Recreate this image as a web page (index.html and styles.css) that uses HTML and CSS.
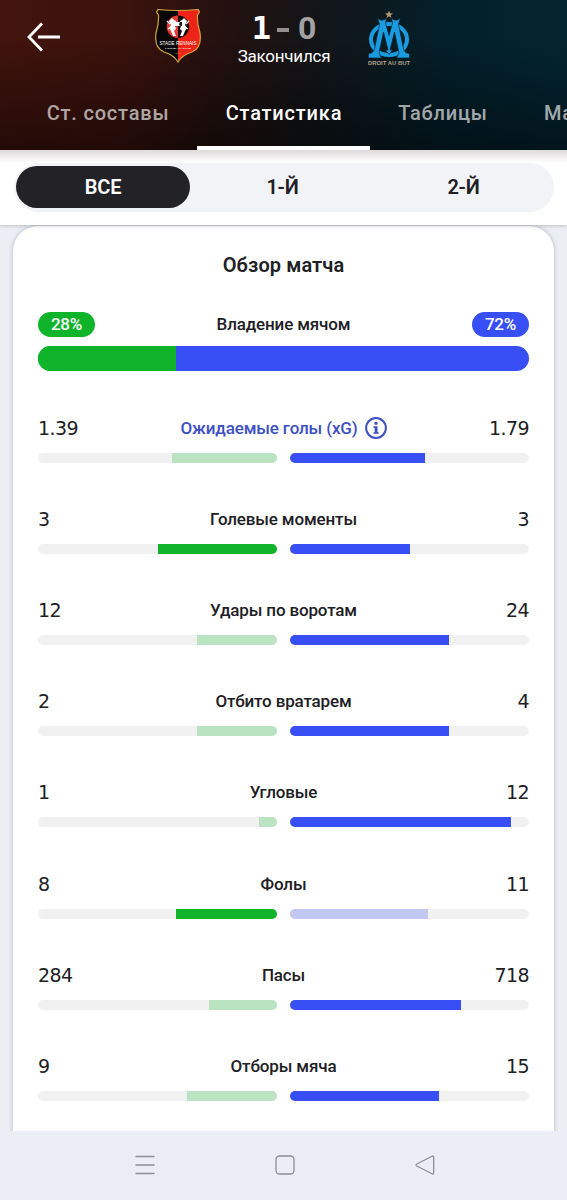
FILE: index.html
```html
<!DOCTYPE html>
<html lang="ru">

<head>
    <meta charset="UTF-8">
    <meta name="viewport" content="width=device-width, initial-scale=1.0">
    <title>Статистика матча</title>
    <link rel="stylesheet" href="styles.css">
</head>

<body>
    <header class="header">
        <div class="match">
            <svg class="back" width="34" height="30" viewBox="0 0 34 30" fill="none" stroke="#fff" stroke-width="2.8">
                <path d="M15 1.500 2 15 15 28.500M11 15H33" />
            </svg>
            <svg class="team-home" width="48" height="56" viewBox="0 0 48 56">
                <path d="M4 1.500Q24 3.500 44 1.500L45.500 4 43.500 7Q43 16 46 25Q48 40 38 44Q28 47 24 54Q20 47 10 44Q0 40 2 25Q5 16 4.500 7L2.500 4Z" fill="#080606" />
                <path d="M24 2.500Q35 2.500 44 1.500L45.500 4 43.500 7Q43 16 46 25Q48 40 38 44Q28 47 24 54Z" fill="#ef2418" />
                <path d="M4 1.500Q24 3.500 44 1.500L45.500 4 43.500 7Q43 16 46 25Q48 40 38 44Q28 47 24 54Q20 47 10 44Q0 40 2 25Q5 16 4.500 7L2.500 4Z" fill="none" stroke="#d6a63c" stroke-width="1.200" />
                <path d="M24 7.500A11 11 0 0 0 24 30Z" fill="#e23a35" />
                <path d="M24 7.500A11 11 0 0 1 24 30Z" fill="#140808" />
                <path d="M18 10 20 12 22 13 23 17 21 18 22 21 20 23 22 28 19 28 17 23 15 20 17 17 15 13Z M30 10 28 12 26 13 25 17 27 18 26 21 28 23 26 28 29 28 31 23 33 20 31 17 33 13Z M20 14H28V18H20Z" fill="#fff" />
                <path d="M13 13 16 16M14 21 17 19M35 13 32 16M34 21 31 19" stroke="#fff" stroke-width="1.200" />
                <text x="24" y="36.500" class="crest-name" textLength="37" lengthAdjust="spacingAndGlyphs">STADE RENNAIS</text>
                <text x="24" y="41" class="crest-sub" textLength="26" lengthAdjust="spacingAndGlyphs">FOOTBALL CLUB</text>
                <text x="24" y="45.500" class="crest-year">1901</text>
            </svg>
            <div class="score">
                <div class="result"><b>1</b><i></i><span>0</span></div>
                <div class="status">Закончился</div>
            </div>
            <svg class="team-away" width="44" height="56" viewBox="0 0 44 56">
                <path d="M22 .5 23 3.300 26 3.400 23.600 5.200 24.500 8 22 6.300 19.500 8 20.400 5.200 18 3.400 21 3.300Z" fill="#b99c6d" />
                <ellipse cx="22" cy="29.500" rx="18" ry="15.500" fill="none" stroke="#1a9be0" stroke-width="4" />
                <path d="M10.500 8Q14 12 19.500 8.500L18.500 13 22 26 25.500 13 24.500 8.500Q30 12 33.500 8L31.500 14 36.500 39Q38 43.500 42.500 43.500V48H29.500L32 43 27.500 22 23 40 25.500 40 22 44.500 18.500 40 21 40 16.500 22 12 43 14.500 48H1.500V43.500Q6 43.500 7.500 39L12.500 14Z" fill="#1a9be0" stroke="#042535" stroke-width=".7" />
                <path d="M17 15 22 31 27 15" fill="none" stroke="#1a9be0" stroke-width="2.500" />
                <text x="22" y="54.500" class="motto" textLength="42" lengthAdjust="spacingAndGlyphs">DROIT AU BUT</text>
            </svg>
        </div>
        <nav class="tabs">
            <div class="tab lineups">Ст. составы</div>
            <div class="tab stats active">Статистика</div>
            <div class="tab tables">Таблицы</div>
            <div class="tab matches">Матчи</div>
        </nav>
    </header>

    <div class="filter">
        <div class="periods">
            <div class="period selected">ВСЕ</div>
            <div class="period">1-Й</div>
            <div class="period">2-Й</div>
        </div>
    </div>

    <main class="content">
        <section class="card">
            <h2>Обзор матча</h2>
            <div class="possession">
                <div class="row">
                    <span class="badge home">28%</span>
                    <span class="label">Владение мячом</span>
                    <span class="badge away">72%</span>
                </div>
                <div class="total"><div class="home" style="width: 28.2%"></div></div>
            </div>
            <div class="stat">
                <div class="row">
                    <span class="value">1.39</span>
                    <span class="label link">Ожидаемые голы (xG)
                        <svg width="22" height="22" viewBox="0 0 22 22">
                            <circle cx="11" cy="11" r="9.900" fill="none" stroke="#3d50c3" stroke-width="2" />
                            <path d="M9.500 5H12.500V7.700H9.500ZM8.500 9.300H12.500V15.200H13.700V16.800H8.500V15.200H9.700V11H8.500Z" fill="#3d50c3" />
                        </svg>
                    </span>
                    <span class="value">1.79</span>
                </div>
                <div class="bars">
                    <div class="bar left"><div class="fill pale" style="width: 43.9%"></div></div>
                    <div class="bar right"><div class="fill" style="width: 56.3%"></div></div>
                </div>
            </div>
            <div class="stat">
                <div class="row"><span class="value">3</span><span class="label">Голевые моменты</span><span class="value">3</span></div>
                <div class="bars">
                    <div class="bar left"><div class="fill" style="width: 50%"></div></div>
                    <div class="bar right"><div class="fill" style="width: 50%"></div></div>
                </div>
            </div>
            <div class="stat">
                <div class="row"><span class="value">12</span><span class="label">Удары по воротам</span><span class="value">24</span></div>
                <div class="bars">
                    <div class="bar left"><div class="fill pale" style="width: 33.3%"></div></div>
                    <div class="bar right"><div class="fill" style="width: 66.7%"></div></div>
                </div>
            </div>
            <div class="stat">
                <div class="row"><span class="value">2</span><span class="label">Отбито вратарем</span><span class="value">4</span></div>
                <div class="bars">
                    <div class="bar left"><div class="fill pale" style="width: 33.3%"></div></div>
                    <div class="bar right"><div class="fill" style="width: 66.7%"></div></div>
                </div>
            </div>
            <div class="stat">
                <div class="row"><span class="value">1</span><span class="label">Угловые</span><span class="value">12</span></div>
                <div class="bars">
                    <div class="bar left"><div class="fill pale" style="width: 7.7%"></div></div>
                    <div class="bar right"><div class="fill" style="width: 92.3%"></div></div>
                </div>
            </div>
            <div class="stat">
                <div class="row"><span class="value">8</span><span class="label">Фолы</span><span class="value">11</span></div>
                <div class="bars">
                    <div class="bar left"><div class="fill" style="width: 42.1%"></div></div>
                    <div class="bar right"><div class="fill pale" style="width: 57.9%"></div></div>
                </div>
            </div>
            <div class="stat">
                <div class="row"><span class="value">284</span><span class="label">Пасы</span><span class="value">718</span></div>
                <div class="bars">
                    <div class="bar left"><div class="fill pale" style="width: 28.3%"></div></div>
                    <div class="bar right"><div class="fill" style="width: 71.7%"></div></div>
                </div>
            </div>
            <div class="stat">
                <div class="row"><span class="value">9</span><span class="label">Отборы мяча</span><span class="value">15</span></div>
                <div class="bars">
                    <div class="bar left"><div class="fill pale" style="width: 37.5%"></div></div>
                    <div class="bar right"><div class="fill" style="width: 62.5%"></div></div>
                </div>
            </div>
        </section>
    </main>

    <footer class="system-nav">
        <svg width="20" height="20" viewBox="0 0 20 20" fill="none" stroke="#8b8e94" stroke-width="1.300">
            <path d="M.5 1.500H19.500M.5 10H19.500M.5 18.500H19.500" />
        </svg>
        <svg width="20" height="20" viewBox="0 0 20 20" fill="none" stroke="#8b8e94" stroke-width="1.300">
            <rect x="1" y="1" width="18" height="18" rx="3.500" />
        </svg>
        <svg width="20" height="20" viewBox="0 0 20 20" fill="none" stroke="#8b8e94" stroke-width="1.300" stroke-linejoin="round">
            <path d="M17.500 1 1.800 9Q.3 10 1.800 11L17.500 19Q18.700 19 18.700 18V2Q18.700 1 17.500 1Z" />
        </svg>
    </footer>
</body>

</html>
```
FILE: styles.css
```css
* {
    margin: 0;
    padding: 0;
    box-sizing: border-box;
}

body {
    width: 567px;
    height: 1200px;
    display: flex;
    flex-direction: column;
    overflow: hidden;
    background: #ebeff4;
    color: #202024;
    font-family: Roboto, 'Liberation Sans', sans-serif;
}

.header {
    height: 150px;
    flex: none;
    position: relative;
    z-index: 3;
    overflow: hidden;
    color: #fff;
    background: linear-gradient(rgba(0, 0, 0, 0) 25%, rgba(0, 0, 0, 0.45)),
        linear-gradient(95deg, #42140d 0%, #3c120d 22%, #25110f 38%, #121518 55%, #03202b 78%, #032632 100%);
}

.match {
    height: 75px;
    display: flex;
    align-items: flex-start;
    padding-left: 27px;
}

.back {
    margin-top: 22px;
}

.team-home {
    margin: 8px 0 0 93px;
}

.crest-name,
.crest-sub,
.crest-year,
.motto {
    font-family: 'Liberation Sans', sans-serif;
    text-anchor: middle;
    fill: #fff;
    font-size: 5px;
}

.crest-sub {
    font-size: 2.5px;
}

.crest-year {
    font-size: 2.5px;
    fill: #d6a63c;
}

.motto {
    font-size: 5px;
    font-weight: bold;
    fill: #b1a18b;
}

.score {
    width: 120px;
    margin-left: 22px;
    text-align: center;
}

.result {
    height: 46px;
    padding-top: 11px;
    display: flex;
    align-items: center;
    justify-content: center;
    font: bold 32px/35px 'DejaVu Sans Mono', monospace;
}

.result i {
    width: 12px;
    height: 4px;
    margin: 3px 9px 0 6px;
    background: #95908f;
}

.result span {
    color: #a3a2a2;
    font-family: Roboto, sans-serif;
}

.status {
    font-size: 17px;
    line-height: 21px;
    letter-spacing: -0.25px;
}

.team-away {
    margin: 10px 0 0 23px;
}

.tabs {
    height: 75px;
    display: flex;
    padding-left: 18px;
    white-space: nowrap;
}

.tab {
    flex: none;
    padding-left: 1px;
    text-align: center;
    color: rgba(255, 255, 255, 0.65);
    font-size: 20px;
    font-weight: 500;
    line-height: 76px;
    letter-spacing: 0.8px;
}

.lineups {
    width: 179px;
}

.stats {
    width: 173px;
}

.tables {
    width: 145px;
}

.matches {
    padding-left: 29px;
}

.tab.active {
    color: #fff;
    border-bottom: 4px solid #fff;
}

.filter {
    height: 75px;
    flex: none;
    position: relative;
    z-index: 2;
    padding: 13px 13px 0 14px;
    background: linear-gradient(#dedada, #fff 13px);
    box-shadow: 0 0 4px rgba(0, 0, 0, 0.3);
}

.periods {
    height: 49px;
    display: flex;
    padding: 3px 0 3px 2px;
    border-radius: 25px;
    background: #f2f3f7;
}

.period {
    flex: 1;
    text-align: center;
    font-size: 20px;
    font-weight: 600;
    line-height: 43px;
    letter-spacing: -0.2px;
}

.period.selected {
    flex: 0 0 174px;
    margin-right: 2px;
    height: 42px;
    border-radius: 21px;
    color: #fff;
    background: #232226;
}

.content {
    flex: 1;
    overflow: hidden;
    padding: 1px 13px 0;
}

.card {
    height: 950px;
    padding: 0 25px;
    border-radius: 25px;
    background: #fff;
    box-shadow: 0 0 4px rgba(40, 50, 70, 0.3);
}

h2 {
    height: 84px;
    text-align: center;
    font-size: 20px;
    font-weight: 600;
    line-height: 78px;
    letter-spacing: 0.1px;
}

.possession {
    height: 103.7px;
}

.row {
    height: 28px;
    display: grid;
    grid-template-columns: 70px 1fr 70px;
    align-items: center;
}

.label {
    text-align: center;
    font-size: 17px;
    font-weight: 500;
    letter-spacing: -0.15px;
}

.label.link {
    display: flex;
    justify-content: center;
    align-items: center;
    gap: 7px;
    color: #3d50c3;
}

.badge {
    width: 57px;
    height: 25px;
    border-radius: 13px;
    text-align: center;
    color: #fff;
    font-size: 17px;
    font-weight: 500;
    line-height: 25px;
    letter-spacing: -0.2px;
}

.home {
    background: #0fb42b;
}

.away {
    justify-self: end;
    background: #374ff4;
}

.total {
    height: 25px;
    margin-top: 8px;
    border-radius: 13px;
    overflow: hidden;
    background: linear-gradient(90deg, #0fb42b 20%, #374ff4 20%);
}

.total .home {
    height: 100%;
}

.stat {
    height: 91.2px;
}

.value {
    font-family: 'DejaVu Sans', sans-serif;
    font-size: 19px;
    letter-spacing: -0.6px;
}

.value:last-child {
    text-align: right;
}

.bars {
    display: grid;
    grid-template-columns: 1fr 1fr;
    gap: 13px;
    margin-top: 11px;
}

.bar {
    height: 10px;
    display: flex;
    overflow: hidden;
    border-radius: 5px;
    background: #f1f1f2;
}

.left {
    justify-content: flex-end;
}

.left .fill {
    background: #0fb42b;
}

.left .pale {
    background: #b9e3c1;
}

.right .fill {
    background: #374ff4;
}

.right .pale {
    background: #c1c8f2;
}

.system-nav {
    height: 69px;
    flex: none;
    display: flex;
    justify-content: center;
    align-items: center;
    gap: 120px;
    padding: 0 0 2px 3px;
    background: #ebeef4;
}
```
